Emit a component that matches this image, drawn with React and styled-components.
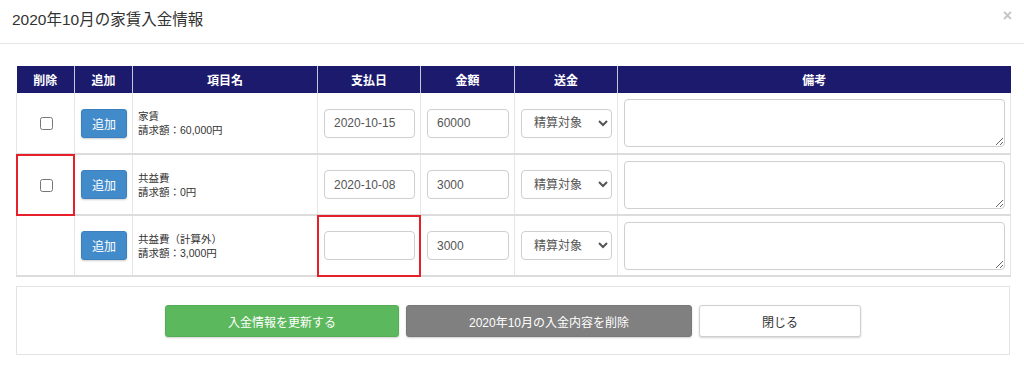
import React from "react";
import styled, { createGlobalStyle } from "styled-components";

const GlobalStyle = createGlobalStyle`
  body {
    margin: 0;
    background: #fff;
    font-family: "Liberation Sans", "Noto Sans CJK JP", sans-serif;
    color: #333;
  }
`;

const Modal = styled.div`
  width: 1024px;
`;

const Header = styled.div`
  height: 44px;
  box-sizing: border-box;
  border-bottom: 1px solid #e5e5e5;
  display: flex;
  justify-content: space-between;
  align-items: flex-start;
  padding: 10px 12px 0 12px;
`;

const Title = styled.h4`
  margin: 0;
  font-size: 15.5px;
  font-weight: normal;
  line-height: 20px;
  color: #333;
`;

const Close = styled.span`
  font-size: 16px;
  font-weight: bold;
  line-height: 12px;
  color: #c4c4c4;
`;

const Body = styled.div`
  padding: 22px 14px 20px 16px;
  display: flex;
  flex-direction: column;
  gap: 9px;
`;

const Table = styled.table`
  width: 994px;
  border-collapse: collapse;
  table-layout: fixed;
`;

const Th = styled.th`
  box-sizing: border-box;
  width: ${(p) => p.w}px;
  height: 27px;
  padding: 0;
  background: #1b1a6d;
  color: #fff;
  font-size: 12px;
  font-weight: bold;
  border-left: 1px solid #c8c8d8;
  border-right: 1px solid #c8c8d8;
  &:first-child {
    border-left: none;
  }
  &:last-child {
    border-right: none;
  }
`;

const Row = styled.tr`
  border-bottom: 2px solid #dcdcdc;
`;

const Td = styled.td`
  position: relative;
  box-sizing: border-box;
  height: 61px;
  padding: 0 5px 0 ${(p) => (p.text ? 5 : 6)}px;
  border-left: 1px solid #e6e6e6;
  border-right: 1px solid #e6e6e6;
  text-align: ${(p) => (p.center ? "center" : "left")};
  vertical-align: middle;
  &::after {
    content: "";
    display: ${(p) => (p.marked ? "block" : "none")};
    position: absolute;
    inset: -1px -1px -2px -1px;
    border: 2px solid #e5202a;
    pointer-events: none;
  }
`;

const Check = styled.input`
  width: 13px;
  height: 13px;
  margin: 0;
  vertical-align: middle;
`;

const AddButton = styled.button`
  width: 46px;
  height: 29px;
  border: 1px solid #3c80c0;
  border-radius: 3px;
  background: #428bca;
  color: #fff;
  font-family: inherit;
  font-size: 12px;
  padding: 0;
  box-shadow: 0 1px 2px rgba(0, 0, 0, 0.2);
`;

const ItemName = styled.div`
  font-size: 10.5px;
  line-height: 14px;
  color: #333;
`;

const Field = styled.input`
  width: 100%;
  height: 29px;
  box-sizing: border-box;
  border: 1px solid #cfcfcf;
  border-radius: 4px;
  padding: 0 9px;
  font-family: inherit;
  font-size: 12px;
  color: #555;
`;

const Select = styled.select`
  width: 100%;
  height: 29px;
  box-sizing: border-box;
  border: 1px solid #cfcfcf;
  border-radius: 4px;
  padding: 0 6px 0 8px;
  font-family: inherit;
  font-size: 12px;
  color: #555;
  background: #fff;
`;

const Note = styled.textarea`
  display: block;
  width: 100%;
  height: 48px;
  box-sizing: border-box;
  border: 1px solid #cfcfcf;
  border-radius: 4px;
  font-family: inherit;
`;

const Footer = styled.div`
  width: 994px;
  box-sizing: border-box;
  border: 1px solid #e3e3e3;
  padding: 18px 0 17px;
  display: flex;
  justify-content: center;
  gap: 7px;
`;

const tones = {
  green: { bg: "#5cb85c", border: "#55ae55", color: "#fff" },
  gray: { bg: "#808080", border: "#787878", color: "#fff" },
  white: { bg: "#fff", border: "#d0d0d0", color: "#333" },
};

const ActionButton = styled.button`
  height: 32px;
  padding: 0 62px;
  border-radius: 3px;
  border: 1px solid ${(p) => tones[p.tone].border};
  background: ${(p) => tones[p.tone].bg};
  color: ${(p) => tones[p.tone].color};
  font-family: inherit;
  font-size: 12px;
  box-shadow: 0 1px 2px rgba(0, 0, 0, 0.18);
`;

const columns = [
  ["削除", 58],
  ["追加", 58],
  ["項目名", 185],
  ["支払日", 103],
  ["金額", 94],
  ["送金", 103],
  ["備考", 393],
];

const rows = [
  { name: "家賃", billed: "60,000円", date: "2020-10-15", amount: "60000", del: true },
  { name: "共益費", billed: "0円", date: "2020-10-08", amount: "3000", del: true, markDel: true },
  { name: "共益費（計算外）", billed: "3,000円", date: "", amount: "3000", del: false, markDate: true },
];

export default function App() {
  return (
    <Modal>
      <GlobalStyle />
      <Header>
        <Title>2020年10月の家賃入金情報</Title>
        <Close>×</Close>
      </Header>
      <Body>
        <Table>
          <thead>
            <tr>
              {columns.map(([label, w]) => (
                <Th key={label} w={w}>
                  {label}
                </Th>
              ))}
            </tr>
          </thead>
          <tbody>
            {rows.map((r) => (
              <Row key={r.name}>
                <Td center marked={r.markDel}>
                  {r.del && <Check type="checkbox" />}
                </Td>
                <Td center>
                  <AddButton>追加</AddButton>
                </Td>
                <Td text>
                  <ItemName>
                    {r.name}
                    <br />
                    請求額：{r.billed}
                  </ItemName>
                </Td>
                <Td marked={r.markDate}>
                  <Field defaultValue={r.date} />
                </Td>
                <Td>
                  <Field defaultValue={r.amount} />
                </Td>
                <Td>
                  <Select defaultValue="a">
                    <option value="a">精算対象</option>
                  </Select>
                </Td>
                <Td>
                  <Note />
                </Td>
              </Row>
            ))}
          </tbody>
        </Table>
        <Footer>
          <ActionButton tone="green">入金情報を更新する</ActionButton>
          <ActionButton tone="gray">2020年10月の入金内容を削除</ActionButton>
          <ActionButton tone="white">閉じる</ActionButton>
        </Footer>
      </Body>
    </Modal>
  );
}
